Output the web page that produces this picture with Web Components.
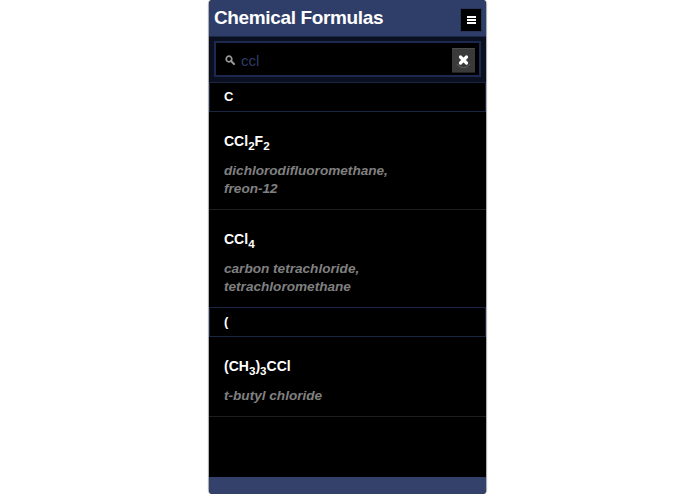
<!DOCTYPE html>
<html>
<head>
<meta charset="utf-8">
<title>Chemical Formulas</title>
<style>
  html, body { margin: 0; padding: 0; background: #fff; }
  body { font-family: "Liberation Sans", Arial, sans-serif; }
  sub { line-height: 0; }
</style>
</head>
<body>
<formula-app>
  <app-header title="Chemical Formulas" slot="header"></app-header>
  <search-box value="ccl"></search-box>
  <letter-divider>C</letter-divider>
  <formula-item>
    <span slot="formula">CCl<sub>2</sub>F<sub>2</sub></span>
    dichlorodifluoromethane,<br>freon-12
  </formula-item>
  <formula-item>
    <span slot="formula">CCl<sub>4</sub></span>
    carbon tetrachloride,<br>tetrachloromethane
  </formula-item>
  <letter-divider>(</letter-divider>
  <formula-item>
    <span slot="formula">(CH<sub>3</sub>)<sub>3</sub>CCl</span>
    t-butyl chloride
  </formula-item>
</formula-app>

<script>
class FormulaApp extends HTMLElement {
  constructor() {
    super();
    this.attachShadow({ mode: 'open' }).innerHTML = `
      <style>
        :host {
          display: flex;
          flex-direction: column;
          width: 277px;
          height: 494px;
          margin: 0 auto;
          background: #000;
          border-radius: 4px;
          overflow: hidden;
          box-shadow: 0 0 1px 1px rgba(60, 60, 60, .45);
          font-family: "Liberation Sans", Arial, sans-serif;
        }
        .list { flex: 1; display: block; }
        .foot { height: 17px; background: #33416b; }
      </style>
      <slot name="header"></slot>
      <div class="list"><slot></slot></div>
      <div class="foot"></div>`;
  }
}

class AppHeader extends HTMLElement {
  constructor() {
    super();
    this.attachShadow({ mode: 'open' }).innerHTML = `
      <style>
        :host {
          display: flex;
          align-items: center;
          justify-content: space-between;
          height: 36px;
          padding: 0 4px 0 5px;
          background: #2f3e68;
          border-bottom: 1px solid #1c2747;
          box-sizing: content-box;
        }
        h1 {
          margin: 0;
          font-size: 19px;
          font-weight: bold;
          letter-spacing: -0.36px;
          color: #fff;
        }
        .menu {
          display: flex;
          flex-direction: column;
          justify-content: center;
          gap: 1px;
          align-items: center;
          width: 22px;
          height: 24px;
          background: #000;
          border: 1px solid #27345a;
          box-sizing: border-box;
          margin-top: 3px;
        }
        .menu i { display: block; width: 9px; height: 2px; background: #fff; }
      </style>
      <h1></h1>
      <div class="menu"><i></i><i></i><i></i></div>`;
    this.shadowRoot.querySelector('h1').textContent = this.getAttribute('title');
    this.removeAttribute('title');
  }
}

class SearchBox extends HTMLElement {
  constructor() {
    super();
    this.attachShadow({ mode: 'open' }).innerHTML = `
      <style>
        :host {
          display: block;
          padding: 4px 5px 6px 5px;
          height: 36px;
          box-sizing: content-box;
          background: #0b1020;
        }
        .field {
          display: flex;
          align-items: center;
          height: 36px;
          box-sizing: border-box;
          border: 2px solid #1c2850;
          background: #000;
          padding: 0 4px 0 9px;
        }
        svg.mag { flex: none; width: 10px; height: 10px; margin: 1px 6px 0 0; }
        .value { flex: 1; color: #2f3d66; font-size: 15px; padding-top: 2px; }
        .clear {
          width: 23px;
          height: 25px;
          margin-top: 2px;
          background: #3a3a3a;
          border-top: 1px solid #4a4a4a;
          border-bottom: 1px solid #222;
          box-sizing: border-box;
        }
        .clear svg { display: block; width: 23px; height: 23px; }
      </style>
      <div class="field">
        <svg class="mag" viewBox="0 0 10 10">
          <circle cx="4" cy="4" r="2.8" fill="none" stroke="#999" stroke-width="1.7"/>
          <path d="M6 6 L9 9" stroke="#999" stroke-width="2" stroke-linecap="round"/>
        </svg>
        <span class="value"></span>
        <div class="clear">
          <svg viewBox="0 0 23 23">
            <path d="M5 15 A7.5 7.5 0 0 0 18 15" fill="none" stroke="#5f5f5f" stroke-width="1"/>
            <path d="M8.5 8 L14.5 14 M14.5 8 L8.5 14" stroke="#fff" stroke-width="3.2" stroke-linecap="round"/>
          </svg>
        </div>
      </div>`;
    this.shadowRoot.querySelector('.value').textContent = this.getAttribute('value');
  }
}

class LetterDivider extends HTMLElement {
  constructor() {
    super();
    this.attachShadow({ mode: 'open' }).innerHTML = `
      <style>
        :host {
          display: block;
          height: 28px;
          line-height: 28px;
          margin-top: -1px;
          padding-left: 14px;
          background: #000;
          border: 1px solid #1b2544;
          color: #fff;
          font-size: 13px;
          font-weight: bold;
        }
      </style>
      <slot></slot>`;
  }
}

class FormulaItem extends HTMLElement {
  constructor() {
    super();
    this.attachShadow({ mode: 'open' }).innerHTML = `
      <style>
        :host {
          display: block;
          padding: 21px 15px 11px;
          border-bottom: 1px solid #1f1f1f;
          background: #000;
        }
        .formula {
          color: #fff;
          font-size: 14px;
          font-weight: bold;
          line-height: 16px;
          margin-bottom: 13px;
        }
        .names {
          color: #808080;
          font-size: 13.6px;
          font-style: italic;
          font-weight: bold;
          line-height: 18px;
        }
      </style>
      <div class="formula"><slot name="formula"></slot></div>
      <div class="names"><slot></slot></div>`;
  }
}

customElements.define('formula-app', FormulaApp);
customElements.define('app-header', AppHeader);
customElements.define('search-box', SearchBox);
customElements.define('letter-divider', LetterDivider);
customElements.define('formula-item', FormulaItem);
</script>
</body>
</html>
